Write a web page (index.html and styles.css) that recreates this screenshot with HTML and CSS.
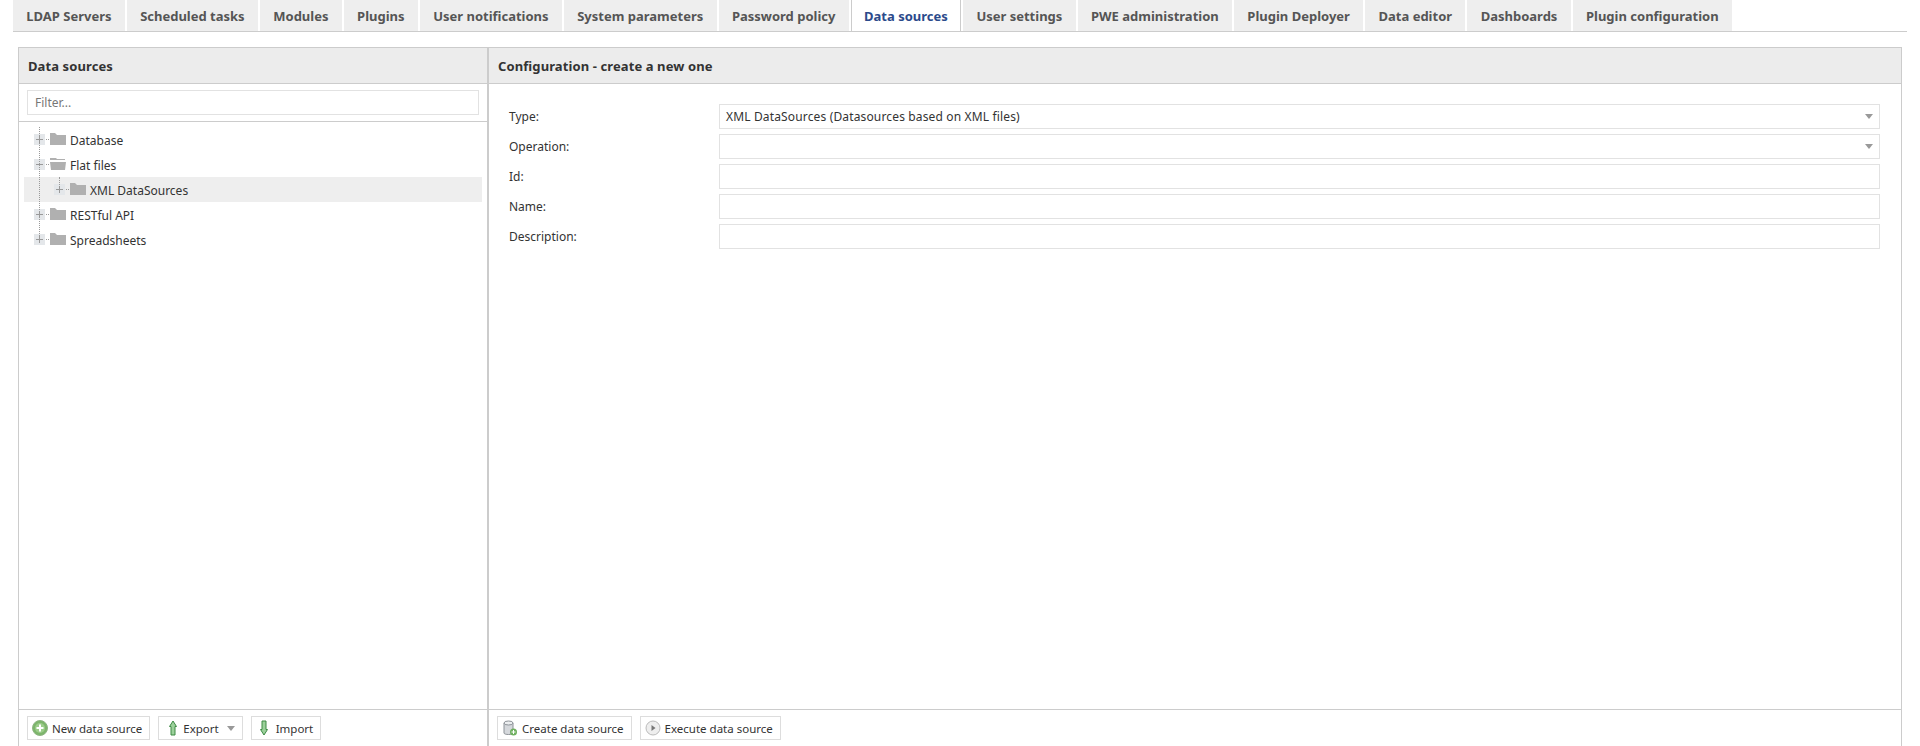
FILE: index.html
```html
<!DOCTYPE html>
<html lang="en">
<head>
<meta charset="utf-8">
<title>Data sources</title>
<link rel="stylesheet" href="styles.css">
</head>
<body>
<nav class="tabs">
  <a class="tab">LDAP Servers</a>
  <a class="tab">Scheduled tasks</a>
  <a class="tab">Modules</a>
  <a class="tab">Plugins</a>
  <a class="tab">User notifications</a>
  <a class="tab">System parameters</a>
  <a class="tab">Password policy</a>
  <a class="tab active">Data sources</a>
  <a class="tab">User settings</a>
  <a class="tab">PWE administration</a>
  <a class="tab">Plugin Deployer</a>
  <a class="tab">Data editor</a>
  <a class="tab">Dashboards</a>
  <a class="tab">Plugin configuration</a>
</nav>
<main class="layout">
  <section class="panel left">
    <header class="panel-head">Data sources</header>
    <div class="filter-bar"><input class="field filter" placeholder="Filter..."></div>
    <div class="tree">
      <div class="node"><svg class="tog" viewBox="0 0 16 11"><rect width="11" height="11" fill="#e4e7ea"/><path d="M5.500 2v7M2 5.500h7" stroke="#999"/><path d="M12 5.500h4" stroke="#999" stroke-dasharray="1 1"/></svg><svg class="folder" viewBox="0 0 16 12"><path d="M0 0h5l2 2h9v10H0z" fill="#b0b0b0"/></svg><span>Database</span></div>
      <div class="node"><svg class="tog" viewBox="0 0 16 11"><rect width="11" height="11" fill="#e4e7ea"/><path d="M2 5.500h7" stroke="#999"/><path d="M12 5.500h4" stroke="#999" stroke-dasharray="1 1"/></svg><svg class="folder" viewBox="0 0 16 12"><path d="M0 0h6l1 1h8v1H0zM0 4h16l-1 8H1z" fill="#b0b0b0"/></svg><span>Flat files</span></div>
      <div class="node child selected"><svg class="tog" viewBox="0 0 16 11"><rect width="11" height="11" fill="#e4e7ea"/><path d="M5.500 2v7M2 5.500h7" stroke="#999"/><path d="M12 5.500h4" stroke="#999" stroke-dasharray="1 1"/></svg><svg class="folder" viewBox="0 0 16 12"><path d="M0 0h5l2 2h9v10H0z" fill="#b0b0b0"/></svg><span>XML DataSources</span></div>
      <div class="node"><svg class="tog" viewBox="0 0 16 11"><rect width="11" height="11" fill="#e4e7ea"/><path d="M5.500 2v7M2 5.500h7" stroke="#999"/><path d="M12 5.500h4" stroke="#999" stroke-dasharray="1 1"/></svg><svg class="folder" viewBox="0 0 16 12"><path d="M0 0h5l2 2h9v10H0z" fill="#b0b0b0"/></svg><span>RESTful API</span></div>
      <div class="node"><svg class="tog" viewBox="0 0 16 11"><rect width="11" height="11" fill="#e4e7ea"/><path d="M5.500 2v7M2 5.500h7" stroke="#999"/><path d="M12 5.500h4" stroke="#999" stroke-dasharray="1 1"/></svg><svg class="folder" viewBox="0 0 16 12"><path d="M0 0h5l2 2h9v10H0z" fill="#b0b0b0"/></svg><span>Spreadsheets</span></div>
    </div>
    <footer class="panel-foot">
      <button class="btn"><svg class="ico" viewBox="0 0 16 16"><circle cx="8" cy="8" r="7.500" fill="#7cb56b" stroke="#8fb483"/><circle cx="8" cy="8" r="5" fill="#9ccc8a"/><path d="M8 4.500v7M4.500 8h7" stroke="#fff" stroke-width="2"/></svg>New data source</button>
      <button class="btn arrow-btn"><svg class="ico" viewBox="0 0 16 16"><path d="M8 1l3.500 5.500H10V15H6V6.500H4.500z" fill="#9bd09a" stroke="#3e8a45"/></svg>Export<i class="caret"></i></button>
      <button class="btn"><svg class="ico" viewBox="0 0 16 16"><path d="M8 15l3.500-5.500H10V1H6v8.500H4.500z" fill="#9bd09a" stroke="#3e8a45"/></svg>Import</button>
    </footer>
  </section>
  <section class="panel right">
    <header class="panel-head">Configuration - create a new one</header>
    <form class="form">
      <label class="lbl">Type:</label><div class="field value">XML DataSources (Datasources based on XML files)<i class="caret"></i></div>
      <label class="lbl">Operation:</label><div class="field value"><i class="caret"></i></div>
      <label class="lbl">Id:</label><div class="field value"></div>
      <label class="lbl">Name:</label><div class="field value"></div>
      <label class="lbl">Description:</label><div class="field value"></div>
    </form>
    <footer class="panel-foot">
      <button class="btn"><svg class="ico" viewBox="0 0 16 16"><path d="M2 3v10c0 2 9 2 9 0V3z" fill="#d5d8dc" stroke="#8d9298"/><ellipse cx="6.500" cy="3" rx="4.500" ry="2" fill="#eceef0" stroke="#8d9298"/><circle cx="11.500" cy="12" r="3.500" fill="#6fb05f"/><path d="M11.500 10v4M9.500 12h4" stroke="#fff"/></svg>Create data source</button>
      <button class="btn"><svg class="ico" viewBox="0 0 16 16"><circle cx="8" cy="8" r="7" fill="#eee" stroke="#bbb"/><path d="M6.500 5l4 3-4 3z" fill="#777"/></svg>Execute data source</button>
    </footer>
  </section>
</main>
</body>
</html>
```
FILE: styles.css
```css
* { box-sizing: border-box; }
html, body { height: 100%; }
body {
  margin: 0;
  height: 746px;
  overflow: hidden;
  background: #fff;
  color: #333;
  font: 12px "Noto Sans", "DejaVu Sans", sans-serif;
  display: flex;
  flex-direction: column;
  padding: 0 13px;
}
.tabs {
  display: flex;
  gap: 2px;
  height: 32px;
  border-bottom: 1px solid #ccc;
  flex: none;
}
.tab {
  display: flex;
  align-items: center;
  height: 31px;
  padding: 0 13.300px;
  background: #eee;
  color: #555;
  font-size: 13px;
  font-weight: 700;
}
.tab.active { background: #fff; color: #2b4a8b; border: 1px solid #ccc; border-width: 0 1px; padding: 0 12.300px; }
.layout {
  flex: 1;
  display: flex;
  margin: 15px 5px 0;
  border: 1px solid #ccc;
  border-bottom: 0;
  min-height: 0;
}
.panel { display: flex; flex-direction: column; min-width: 0; }
.left { width: 470px; flex: none; border-right: 2px solid #ccc; }
.right { flex: 1; }
.panel-head {
  height: 36px;
  flex: none;
  display: flex;
  align-items: center;
  padding: 0 9px;
  background: #ececec;
  border-bottom: 1px solid #ccc;
  font-size: 13px;
  font-weight: 700;
  letter-spacing: .1px;
}
.filter-bar { height: 38px; flex: none; padding: 6px 8px; border-bottom: 1px solid #ccc; }
.field { border: 1px solid #e2e2e2; background: #fff; font: inherit; color: #333; }
.filter { display: block; width: 100%; height: 25px; padding: 0 7px; }
.filter::placeholder { color: #777; }
.tree { flex: 1; padding: 5px 5px 0; position: relative; }
.tree::before { content: ""; position: absolute; z-index: 1; left: 20px; top: 5px; height: 113px; border-left: 1px dotted #999; }
.node { display: flex; align-items: center; height: 25px; padding-left: 10px; position: relative; }
.node span { margin-top: 2px; }
.node.child { padding-left: 30px; }
.node.child::before { content: ""; position: absolute; left: 35px; top: 0; height: 12px; border-left: 1px dotted #999; }
.node.selected { background: #eee; }
.tog { width: 16px; height: 11px; flex: none; }
.folder { width: 16px; height: 12px; margin: 0 4px 1px 0; flex: none; }
.panel-foot {
  height: 37px;
  flex: none;
  display: flex;
  align-items: center;
  gap: 8px;
  padding: 0 8px;
  border-top: 1px solid #ccc;
}
.btn {
  display: flex;
  align-items: center;
  height: 24px;
  padding: 0 7px 0 4px;
  gap: 4px;
  background: #fff;
  border: 1px solid #ddd;
  font: inherit;
  font-size: 11.500px;
  color: #333;
  white-space: nowrap;
}
.arrow-btn { padding-left: 6px; gap: 2px; }
.ico { width: 16px; height: 16px; flex: none; }
.caret { width: 0; height: 0; border: 4px solid transparent; border-top: 5px solid #999; border-bottom: 0; }
.btn .caret { margin-left: 6px; }
.form {
  flex: 1;
  display: grid;
  grid-template-columns: 210px 1fr;
  grid-auto-rows: 25px;
  row-gap: 5px;
  align-content: start;
  padding: 20px 21px 0 20px;
}
.lbl { display: flex; align-items: center; }
.value { display: flex; align-items: center; padding: 0 6px; letter-spacing: .15px; }
.value .caret { margin-left: auto; }
```
